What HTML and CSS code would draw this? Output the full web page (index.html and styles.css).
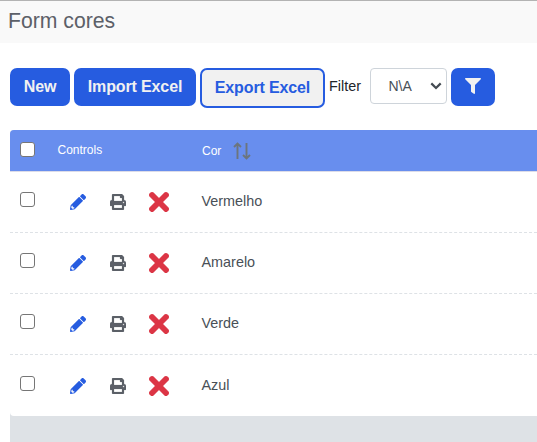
FILE: index.html
```html
<!DOCTYPE html>
<html lang="pt">
<head>
<meta charset="utf-8">
<title>Form cores</title>
<link rel="stylesheet" href="styles.css">
</head>
<body>
<svg class="defs" aria-hidden="true">
  <symbol id="pencil" viewBox="0 0 512 512"><path d="M497.9 142.1l-46.1 46.1c-4.7 4.7-12.3 4.7-17 0l-111-111c-4.7-4.7-4.7-12.3 0-17l46.1-46.1c18.7-18.7 49.1-18.7 67.9 0l60.1 60.1c18.8 18.7 18.8 49.1 0 67.9zM284.2 99.8L21.6 362.4.4 483.9c-2.9 16.4 11.4 30.6 27.8 27.8l121.5-21.3 262.6-262.6c4.7-4.7 4.7-12.3 0-17l-111-111c-4.8-4.7-12.4-4.7-17.1 0zM88 424h48v36.3l-64.5 11.3-31.1-31.1L51.7 376H88v48z"/></symbol>
  <symbol id="print" viewBox="0 0 512 512"><path d="M448 192V77.25c0-8.49-3.37-16.62-9.37-22.63L393.37 9.37c-6-6-14.14-9.37-22.63-9.37H96C78.33 0 64 14.33 64 32v160c-35.35 0-64 28.65-64 64v112c0 8.84 7.16 16 16 16h48v96c0 17.67 14.33 32 32 32h320c17.67 0 32-14.33 32-32v-96h48c8.84 0 16-7.16 16-16V256c0-35.35-28.65-64-64-64zm-64 256H128v-96h256v96zm0-224H128V64h192v48c0 8.84 7.16 16 16 16h48v96zm48 72c-13.25 0-24-10.75-24-24 0-13.26 10.75-24 24-24s24 10.74 24 24c0 13.25-10.75 24-24 24z"/></symbol>
  <symbol id="times" viewBox="0 80 352 352"><path d="M242.72 256l100.07-100.07c12.28-12.28 12.28-32.19 0-44.48l-22.24-22.24c-12.28-12.28-32.19-12.28-44.48 0L176 189.28 75.93 89.21c-12.28-12.28-32.19-12.28-44.48 0L9.21 111.45c-12.28 12.28-12.28 32.19 0 44.48L109.28 256 9.21 356.07c-12.28 12.28-12.28 32.19 0 44.48l22.24 22.24c12.28 12.28 32.2 12.28 44.48 0L176 322.72l100.07 100.07c12.28 12.28 32.2 12.28 44.48 0l22.24-22.24c12.28-12.28 12.28-32.19 0-44.48L242.72 256z"/></symbol>
</svg>
<header class="title">Form cores</header>
<div class="toolbar">
  <button class="btn new">New</button>
  <button class="btn import">Import Excel</button>
  <button class="btn export">Export Excel</button>
  <span class="label">Filter</span>
  <div class="select"><span>N\A</span>
    <svg width="12" height="8" viewBox="0 0 12 8"><path d="M1.3 1.4 6 6l4.7-4.6" fill="none" stroke="#444b52" stroke-width="2.2"/></svg>
  </div>
  <button class="btn filter" aria-label="Filter"><svg width="16" height="16" viewBox="0 0 512 512"><path d="M487.976 0H24.028C2.71 0-8.047 25.866 7.058 40.971L192 225.941V432c0 7.831 3.821 15.17 10.237 19.662l80 55.98C298.02 518.69 320 507.493 320 487.98V225.941l184.947-184.97C520.021 25.896 509.338 0 487.976 0z"/></svg></button>
</div>
<main class="table">
  <div class="row head">
    <input type="checkbox" class="check">
    <span class="controls">Controls</span>
    <span class="cor">Cor</span>
    <svg class="sort" width="18" height="18" viewBox="0 0 18 18"><path d="M4.5 17V1.5M1 5l3.5-3.5L8 5M13.5 1v15.5M10 13l3.5 3.5L17 13"/></svg>
  </div>
  <div class="row"><input type="checkbox" class="check"><svg class="pencil"><use href="#pencil"/></svg><svg class="print"><use href="#print"/></svg><svg class="times"><use href="#times"/></svg><span class="name">Vermelho</span></div>
  <div class="row"><input type="checkbox" class="check"><svg class="pencil"><use href="#pencil"/></svg><svg class="print"><use href="#print"/></svg><svg class="times"><use href="#times"/></svg><span class="name">Amarelo</span></div>
  <div class="row"><input type="checkbox" class="check"><svg class="pencil"><use href="#pencil"/></svg><svg class="print"><use href="#print"/></svg><svg class="times"><use href="#times"/></svg><span class="name">Verde</span></div>
  <div class="row"><input type="checkbox" class="check"><svg class="pencil"><use href="#pencil"/></svg><svg class="print"><use href="#print"/></svg><svg class="times"><use href="#times"/></svg><span class="name">Azul</span></div>
</main>
</body>
</html>
```
FILE: styles.css
```css
* { box-sizing: border-box; }
body {
  margin: 0;
  height: 442px;
  overflow: hidden;
  display: flex;
  flex-direction: column;
  background: #fff;
  color: #495057;
  font-family: "Liberation Sans", Arial, sans-serif;
  font-size: 14.4px;
}
.defs { display: none; }
.title {
  height: 43px;
  flex: none;
  padding-left: 8px;
  border-top: 1px solid #b3b3b3;
  background: #f9f9f9;
  color: #5c6068;
  font-size: 21.2px;
  line-height: 40px;
}
.toolbar {
  display: flex;
  align-items: flex-start;
  height: 62px;
  flex: none;
  margin: 25px 0 0 10px;
}
.btn {
  height: 38px;
  padding: 0;
  border: 0;
  border-radius: 7px;
  background: #265ce0;
  color: #f1f1f1;
  font: bold 16px/36px "Liberation Sans", Arial, sans-serif;
  letter-spacing: -0.13px;
  white-space: nowrap;
}
.new { width: 60px; margin-right: 4px; }
.import { width: 122px; margin-right: 4px; }
.export {
  width: 125px;
  height: 40px;
  border: 2px solid #265ce0;
  background: #f1f1f1;
  color: #265ce0;
}
.label { width: 45px; padding-left: 4px; color: #212529; line-height: 36px; }
.select {
  display: flex;
  align-items: center;
  justify-content: space-between;
  width: 77px;
  height: 36px;
  margin-right: 4px;
  padding: 0 4px 0 17.5px;
  border: 1px solid #ced4da;
  border-radius: 4px;
  font-size: 14px;
}
.filter { display: flex; align-items: center; justify-content: center; width: 44px; }
.filter svg { fill: #f1f1f1; margin-bottom: 2px; }
.table {
  flex: 1;
  margin-left: 10px;
  border-radius: 4px 0 0;
  background: #dee2e6;
}
.row {
  display: flex;
  align-items: center;
  height: 61px;
  border-bottom: 1px dashed #dee2e6;
  background: #fff;
}
.row:last-child { border-bottom: 0; border-radius: 0 0 0 4px; }
.head {
  height: 42px;
  border-bottom: 1px solid #dcdce8;
  border-radius: 4px 0 0;
  background: #688eee;
  color: #fff;
  font-size: 12px;
}
.check {
  appearance: none;
  flex: none;
  width: 15px;
  height: 15px;
  margin: 0 0 0 10px;
  border: 1px solid #767676;
  border-radius: 3px;
  background: #fff;
}
.row:not(.head) .check { margin-bottom: 5px; }
.head .check { margin-bottom: 2px; }
.controls { width: 144.5px; margin-left: 22.5px; padding-bottom: 1px; }
.cor { width: 31px; padding-top: 1px; }
.sort { fill: none; stroke: #6c757d; stroke-width: 1.9; }
.pencil { width: 16px; height: 16px; margin-left: 35px; fill: #265ce0; }
.print { width: 16px; height: 16px; margin-left: 24px; fill: #5c6068; stroke: #5c6068; stroke-width: 6; }
.times { width: 20px; height: 20px; margin-left: 23px; fill: #dc3545; stroke: #dc3545; stroke-width: 8; }
.name { margin-left: 32.5px; padding-bottom: 2px; }
```
